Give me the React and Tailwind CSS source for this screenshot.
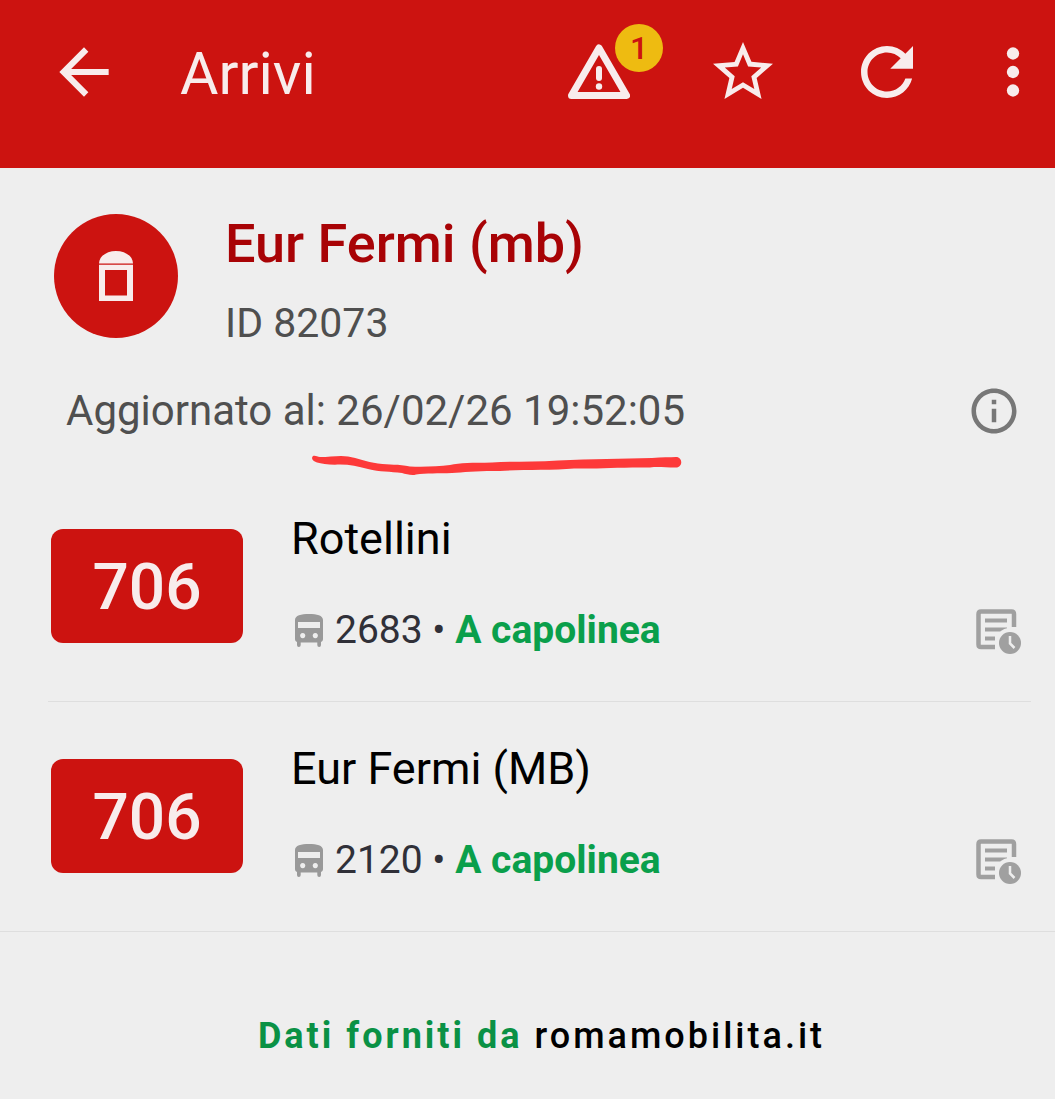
import React from "react";

const arrivals = [
  { id: 1, line: "706", destination: "Rotellini", vehicle: "2683", status: "A capolinea" },
  { id: 2, line: "706", destination: "Eur Fermi (MB)", vehicle: "2120", status: "A capolinea" },
];

const BackIcon = () => (
  <svg viewBox="0 0 24 24" className="w-[74px] h-[74px]" fill="currentColor" aria-hidden="true">
    <path d="M20 11H7.83l5.59-5.59L12 4l-8 8 8 8 1.41-1.41L7.83 13H20v-2z" />
  </svg>
);

const WarningIcon = () => (
  <svg viewBox="0 0 62 56" className="w-[62px] h-[56px]" aria-hidden="true">
    <path
      d="M31 4 L58.5 51.5 H3.5 Z"
      fill="none"
      stroke="currentColor"
      strokeWidth="7"
      strokeLinejoin="round"
    />
    <rect x="28" y="22" width="6" height="15" rx="3" fill="currentColor" />
    <circle cx="31" cy="42.5" r="3.2" fill="currentColor" />
  </svg>
);

const StarIcon = () => (
  <svg viewBox="0 0 24 24" className="w-[72px] h-[72px]" fill="currentColor" aria-hidden="true">
    <path d="M22 9.24l-7.19-.62L12 2 9.19 8.63 2 9.24l5.46 4.73L5.82 21 12 17.27 18.18 21l-1.63-7.03L22 9.24zM12 15.4l-3.76 2.27 1-4.28-3.32-2.88 4.38-.38L12 6.1l1.71 4.04 4.38.38-3.32 2.88 1 4.28L12 15.4z" />
  </svg>
);

const RefreshIcon = () => (
  <svg viewBox="0 0 24 24" className="w-[78px] h-[78px]" fill="currentColor" aria-hidden="true">
    <path d="M17.65 6.35C16.2 4.9 14.21 4 12 4c-4.42 0-7.99 3.58-7.99 8s3.57 8 7.99 8c3.73 0 6.84-2.55 7.73-6h-2.08c-.82 2.33-3.04 4-5.65 4-3.31 0-6-2.69-6-6s2.69-6 6-6c1.66 0 3.14.69 4.22 1.78L13 11h7V4l-2.35 2.35z" />
  </svg>
);

const MoreIcon = () => (
  <svg viewBox="0 0 24 24" className="w-[74px] h-[74px]" fill="currentColor" aria-hidden="true">
    <circle cx="12" cy="6" r="2" />
    <circle cx="12" cy="12" r="2" />
    <circle cx="12" cy="18" r="2" />
  </svg>
);

const StopIcon = () => (
  <svg viewBox="0 0 34 50" className="w-[34px] h-[50px]" fill="currentColor" aria-hidden="true">
    <path d="M0 12.6 C0 5 8 0 17 0 S34 5 34 12.6 Z" />
    <path fillRule="evenodd" d="M0 13.8 H34 V50 H0 Z M6 19 V44.5 H28 V19 Z" />
  </svg>
);

const InfoIcon = () => (
  <svg viewBox="0 0 24 24" className="w-[54px] h-[54px]" fill="currentColor" aria-hidden="true">
    <path d="M11 7h2v2h-2zm0 4h2v6h-2zm1-9C6.48 2 2 6.48 2 12s4.48 10 10 10 10-4.48 10-10S17.52 2 12 2zm0 18c-4.41 0-8-3.59-8-8s3.59-8 8-8 8 3.59 8 8-3.59 8-8 8z" />
  </svg>
);

const BusIcon = () => (
  <svg viewBox="0 0 28 33" className="w-[28px] h-[33px] shrink-0" fill="currentColor" aria-hidden="true">
    <path
      fillRule="evenodd"
      d="M0 6 C0 1.5 6 0 14 0 S28 1.5 28 6 V25 C28 26.600 27.200 27.600 26 28 V31 Q26 33 24.200 33 Q22.300 33 22.300 31 V28.500 H5.700 V31 Q5.700 33 3.800 33 Q2 33 2 31 V28 C0.800 27.600 0 26.600 0 25 Z M3 8 V14 H25 V8 Z M7.700 19 a2.600 2.600 0 1 0 0.010 0 Z M20.300 19 a2.600 2.600 0 1 0 0.010 0 Z"
    />
  </svg>
);

const ScheduleIcon = () => (
  <svg viewBox="0 0 45 45" className="w-[45px] h-[45px]" aria-hidden="true">
    <path
      d="M38 18 V5 Q38 2.500 35.500 2.500 H5 Q2.500 2.500 2.500 5 V35.500 Q2.500 38 5 38 H19"
      fill="none"
      stroke="currentColor"
      strokeWidth="4.500"
    />
    <path d="M9 9.500 H31 V13.500 H9 Z M9 18.500 H31 V22.500 H9 Z M9 27.500 H19 V31.500 H9 Z" fill="currentColor" />
    <circle cx="34" cy="34" r="15" fill="#eeeeee" />
    <circle cx="34" cy="34" r="11" fill="currentColor" />
    <path d="M34 27 V34.500 L38.500 39" fill="none" stroke="#eeeeee" strokeWidth="2.500" />
  </svg>
);

const Toolbar = () => (
  <header className="bg-[#cc1310] text-[#f8ecec] pb-6">
    <div className="flex items-center h-36 pl-[47px]">
      <button type="button" aria-label="Indietro" className="shrink-0">
        <BackIcon />
      </button>
      <h1 className="ml-[59px] pt-1 text-[59px] leading-[64px]">Arrivi</h1>
      <div className="ml-auto flex items-center">
        <button type="button" aria-label="Avvisi" className="w-36 flex justify-center">
          <span className="relative">
            <WarningIcon />
            <span className="absolute -top-5 -right-[33px] w-12 h-12 rounded-full bg-[#eebb11] text-[#cc1310] text-[32px] leading-[48px] font-medium text-center">
              1
            </span>
          </span>
        </button>
        <button type="button" aria-label="Preferiti" className="w-36 flex justify-center">
          <StarIcon />
        </button>
        <button type="button" aria-label="Aggiorna" className="w-36 flex justify-center">
          <RefreshIcon />
        </button>
        <button type="button" aria-label="Altro" className="w-24 pl-3 flex justify-center">
          <MoreIcon />
        </button>
      </div>
    </div>
  </header>
);

const StopHeader = () => (
  <section className="pt-[46px]">
    <div className="flex pl-[54px] pr-8">
      <div className="w-[124px] h-[124px] shrink-0 rounded-full bg-[#cc1310] text-[#f8ecec] flex items-center justify-center">
        <StopIcon />
      </div>
      <div className="ml-[47px]">
        <h2 className="text-[54px] leading-[60px] font-medium text-[#a80306]">Eur Fermi (mb)</h2>
        <p className="mt-[25px] text-[41px] leading-[48px] text-[#4f4f4f]">ID 82073</p>
      </div>
    </div>
    <div className="relative mt-[37px] pl-[66px] pr-[34px] flex items-center justify-between">
      <p className="text-[42px] leading-[48px] text-[#4f4f4f]">Aggiornato al: 26/02/26 19:52:05</p>
      <button type="button" aria-label="Informazioni" className="text-[#777777]">
        <InfoIcon />
      </button>
      {/* hand-drawn underline below the date */}
      <svg
        viewBox="0 0 370 21"
        className="absolute left-[312px] top-[71px] w-[370px] h-[21px]"
        fill="#fd3939"
        aria-hidden="true"
      >
        <path d="M1 1 C3 0 5 1.500 8 2 C18 2 28 0 36 1.500 C46 3 54 7 66 8.500 C78 10 86 9 98 11.500 C112 12 126 11.500 138 10 C148 7.500 160 8 180 7.500 C200 6 222 7.500 246 5.500 C280 4 310 4 340 3 C350 2 358 2.500 364 2 C371 2 371 12.500 364 12.500 C352 12.500 346 11.500 338 12.500 C308 12 288 14 262 13.500 C240 15.500 206 14.500 188 16 C170 15.500 152 17 140 18 C126 18.500 114 18 104 19.500 C100 21 94 19 90 18 C78 16.500 68 17 56 14 C46 11.500 38 9.500 28 9.500 C18 10 10 9 5 7.500 C0 6 -1 3 1 1 Z" />
      </svg>
    </div>
  </section>
);

const ArrivalRow = ({ arrival, last }) => (
  <li>
    <div className="flex pt-[41px] pb-[47px] pl-[51px] pr-[34px]">
      <div className="mt-4 w-48 h-[114px] shrink-0 rounded-xl bg-[#cc1310] text-[#f8ecec] text-[64px] leading-[118px] font-medium text-center">
        {arrival.line}
      </div>
      <div className="ml-12">
        <h3 className="text-[45px] leading-[52px] text-black">{arrival.destination}</h3>
        <p className="mt-[41px] pl-1 flex items-center text-[39px] leading-[48px] text-[#303038]">
          <span className="text-[#999999] mr-3">
            <BusIcon />
          </span>
          <span>
            {arrival.vehicle} • <b className="font-bold text-[#0a9f4b]">{arrival.status}</b>
          </span>
        </p>
      </div>
      <button type="button" aria-label="Orari" className="ml-auto self-end text-[#a0a0a0]">
        <ScheduleIcon />
      </button>
    </div>
    <hr className={last ? "border-[#dedede]" : "border-[#dedede] ml-12 mr-6"} />
  </li>
);

const App = () => {
  return (
    <div className="min-h-screen bg-[#eeeeee] font-['Roboto',sans-serif]">
      <Toolbar />
      <main>
        <StopHeader />
        <ul className="mt-[34px]">
          {arrivals.map((arrival, index) => (
            <ArrivalRow key={arrival.id} arrival={arrival} last={index === arrivals.length - 1} />
          ))}
        </ul>
      </main>
      <footer className="pt-[82px] pb-10 pl-7 text-center text-[36px] leading-[44px] tracking-[3px]">
        <b className="font-bold text-[#0a9145]">Dati forniti da</b>{" "}
        <a href="#" className="font-medium text-black">
          romamobilita.it
        </a>
      </footer>
    </div>
  );
};

export default App;
